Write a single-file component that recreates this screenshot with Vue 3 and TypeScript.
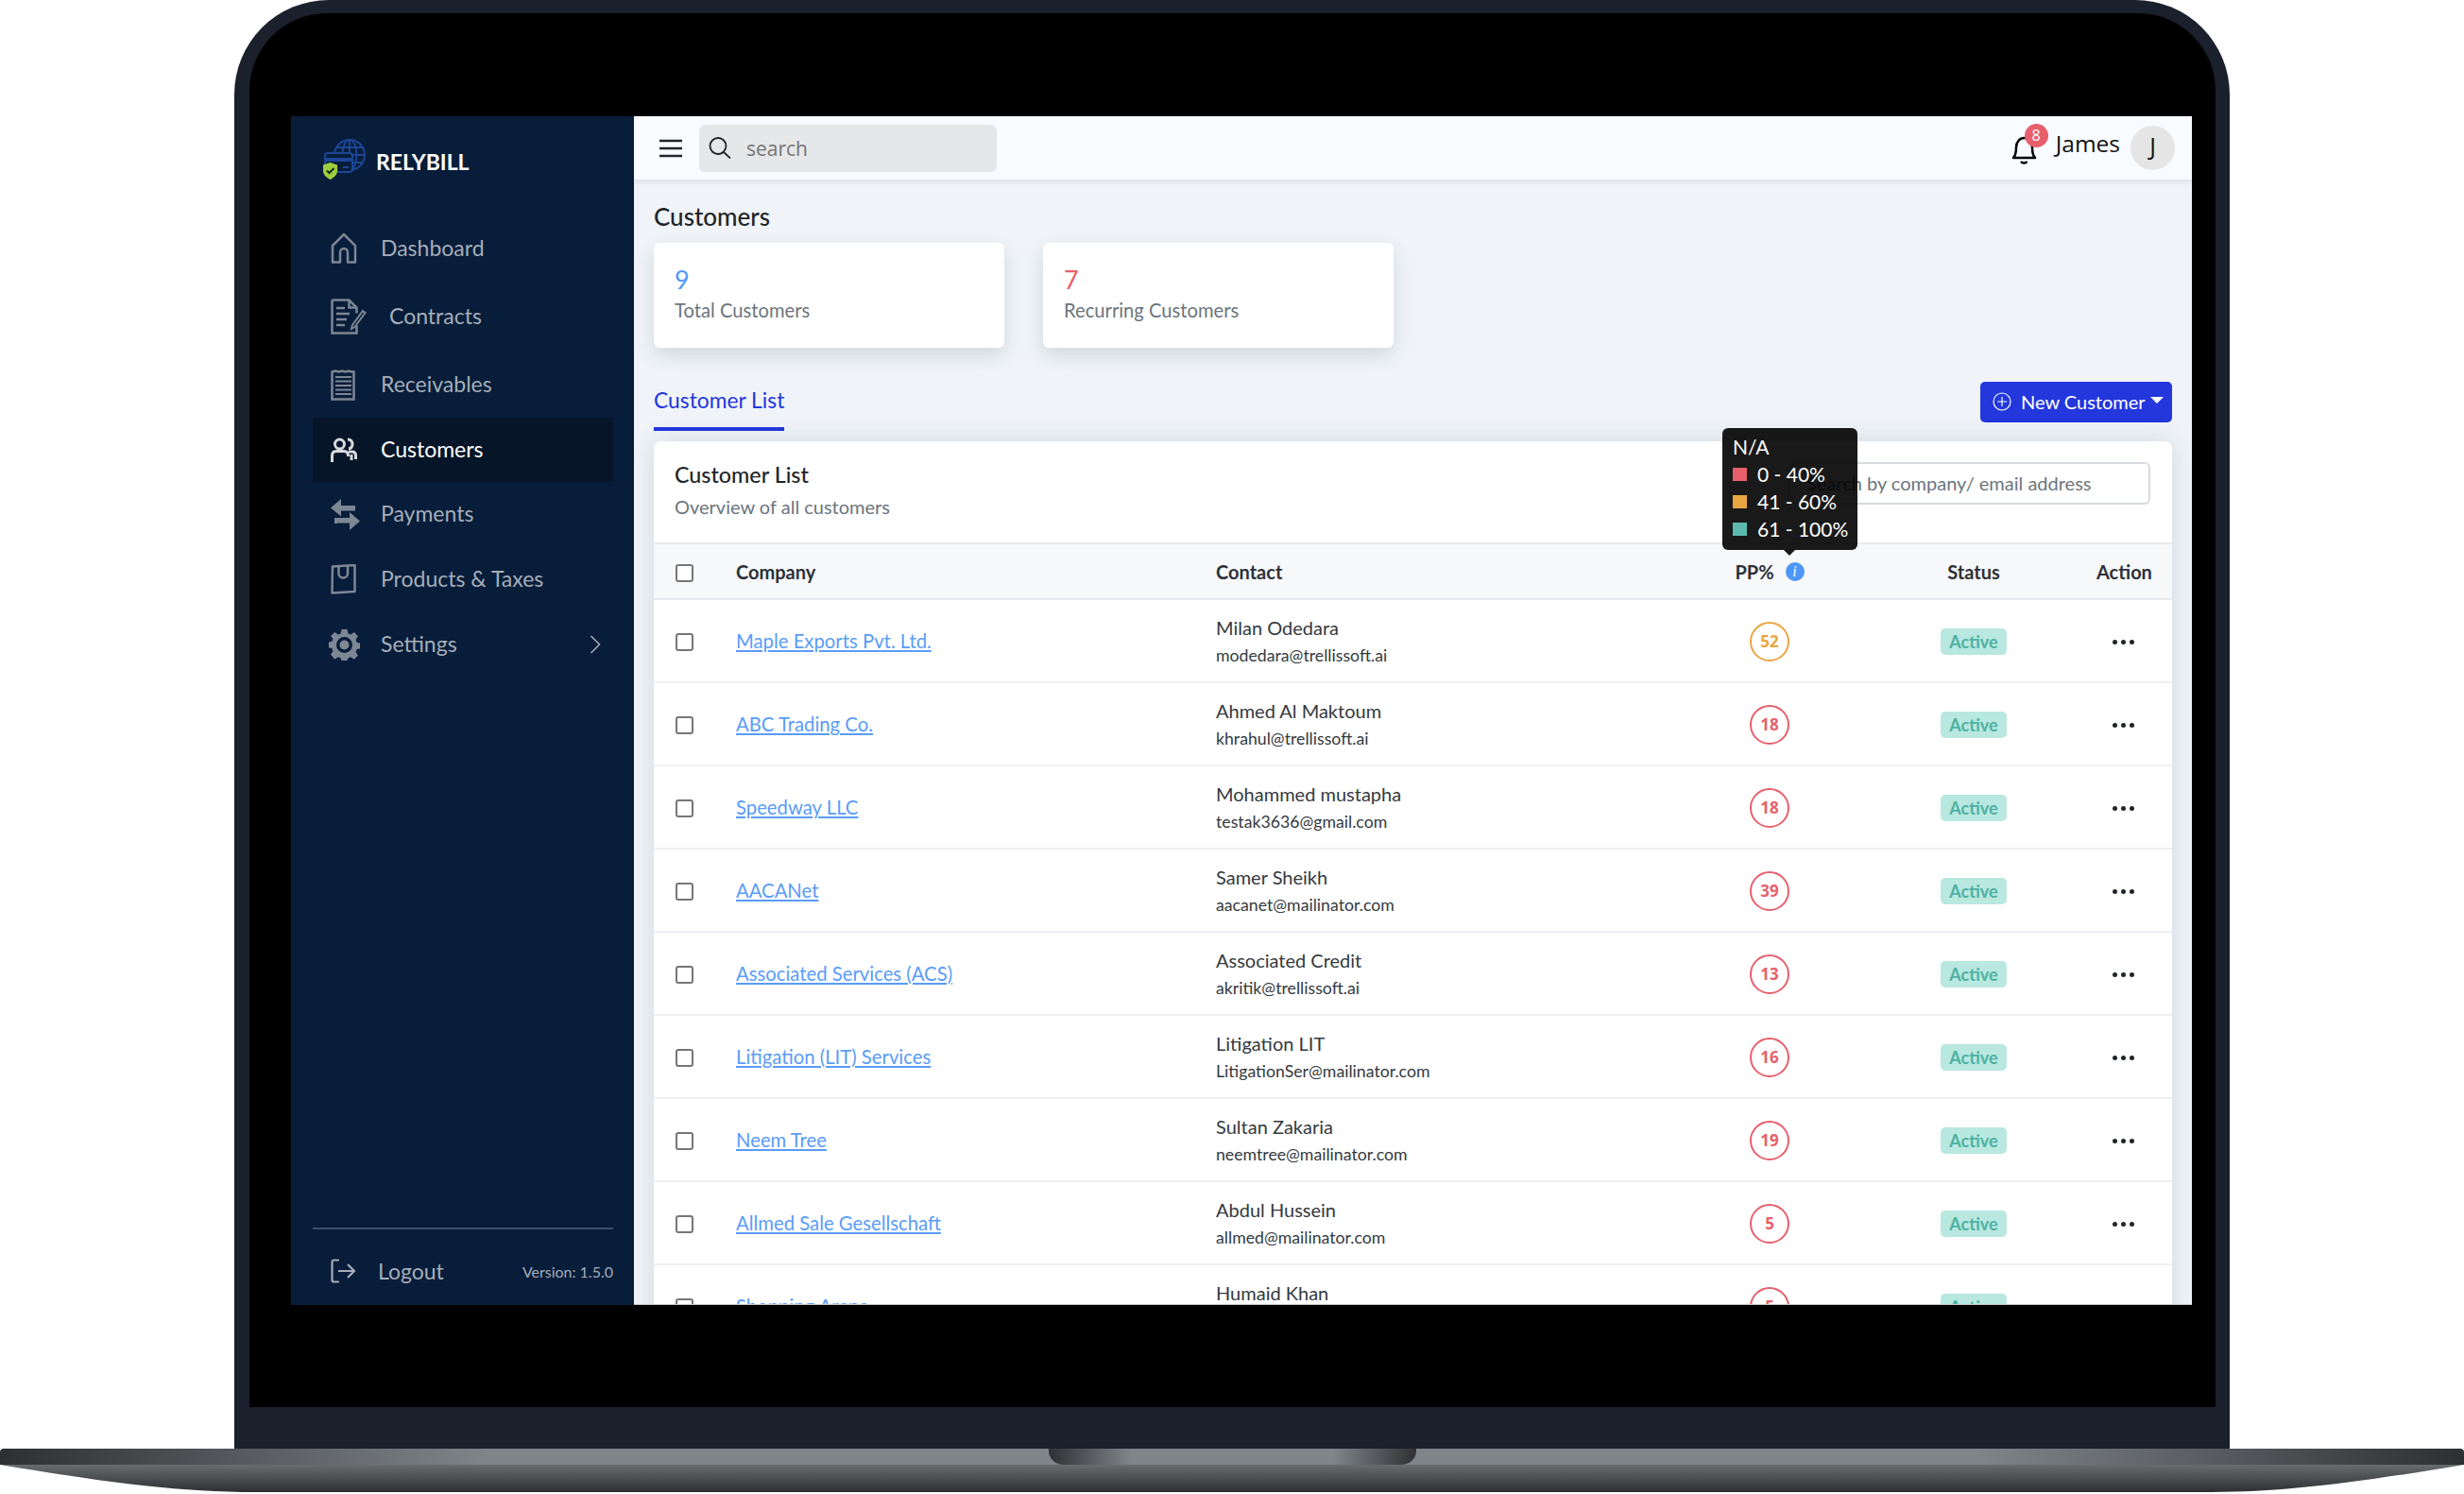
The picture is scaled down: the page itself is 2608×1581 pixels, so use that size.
<script setup lang="ts">
interface Customer {
  company: string
  contact: string
  email: string
  score: number
}

interface NavItem {
  label: string
  icon: string
  wide?: boolean
  active?: boolean
  arrow?: boolean
}

const navItems: NavItem[] = [
  { label: 'Dashboard', icon: 'home' },
  { label: 'Contracts', icon: 'contract', wide: true },
  { label: 'Receivables', icon: 'receipt' },
  { label: 'Customers', icon: 'people', active: true },
  { label: 'Payments', icon: 'swap' },
  { label: 'Products & Taxes', icon: 'bag' },
  { label: 'Settings', icon: 'gear', arrow: true }
]

const customers: Customer[] = [
  { company: 'Maple Exports Pvt. Ltd.', contact: 'Milan Odedara', email: 'modedara@trellissoft.ai', score: 52 },
  { company: 'ABC Trading Co.', contact: 'Ahmed Al Maktoum', email: 'khrahul@trellissoft.ai', score: 18 },
  { company: 'Speedway LLC', contact: 'Mohammed mustapha', email: 'testak3636@gmail.com', score: 18 },
  { company: 'AACANet', contact: 'Samer Sheikh', email: 'aacanet@mailinator.com', score: 39 },
  { company: 'Associated Services (ACS)', contact: 'Associated Credit', email: 'akritik@trellissoft.ai', score: 13 },
  { company: 'Litigation (LIT) Services', contact: 'Litigation LIT', email: 'LitigationSer@mailinator.com', score: 16 },
  { company: 'Neem Tree', contact: 'Sultan Zakaria', email: 'neemtree@mailinator.com', score: 19 },
  { company: 'Allmed Sale Gesellschaft', contact: 'Abdul Hussein', email: 'allmed@mailinator.com', score: 5 },
  { company: 'Shopping Arena', contact: 'Humaid Khan', email: 'shopping@mailinator.com', score: 5 }
]

const scoreClass = (score: number) => (score > 40 ? 'mid' : 'low')
</script>

<template>
  <div class="stage">
    <div class="frame">
      <div class="bezel">
        <div class="screen">
          <aside class="sidebar">
            <div class="brand">
              <svg class="logo" width="45" height="45" viewBox="0 0 45 45" fill="none">
                <g stroke="#1d4596" stroke-width="2">
                  <circle cx="28" cy="18" r="16" />
                  <ellipse cx="28" cy="18" rx="7.5" ry="16" />
                  <path d="M28 2v32M12 18h32M14.5 10h27M14.5 26h27" />
                </g>
                <rect x="2" y="16" width="29" height="20" rx="3" fill="#071d3a" stroke="#1d4596" stroke-width="2" />
                <path d="M2 21h29v4H2z" fill="#1d4596" />
                <path d="M21 31h6" stroke="#1d4596" stroke-width="2" />
                <path d="M7.5 26 15 28.500V35c0 4-3.500 7-7.500 9C3.500 42 0 39 0 35v-6.500z" fill="#9ccf3e" />
                <path d="m4 34.500 2.500 2.500 5-5" stroke="#0f2a1c" stroke-width="2" />
              </svg>
              <span class="brand-name">RELYBILL</span>
            </div>

            <nav class="nav">
              <a
                v-for="item in navItems"
                :key="item.label"
                class="nav-item"
                :class="{ active: item.active, wide: item.wide }"
              >
                <span class="nav-icon">
                  <svg v-if="item.icon === 'home'" width="28" height="34" viewBox="0 0 28 34" fill="none" stroke="currentColor" stroke-width="2.500">
                    <path d="M2 14 14 2l12 12v17.500h-8V21a4 4 0 0 0-8 0v10.500H2z" stroke-linejoin="round" />
                  </svg>
                  <svg v-else-if="item.icon === 'contract'" width="38" height="38" viewBox="0 0 38 38" fill="none" stroke="currentColor" stroke-width="2.500">
                    <path d="M1.500 1.500h18l8 8v6M1.500 1.500v35h26v-8" />
                    <path d="M19.500 1.500v8h8M6 10h9M6 16h14M6 22h11M6 28h9" />
                    <path d="m23 28 11-15 2.500 2L25.500 30l-3.500 2z" stroke-width="2" />
                  </svg>
                  <svg v-else-if="item.icon === 'receipt'" width="27" height="33" viewBox="0 0 27 33" fill="none" stroke="currentColor" stroke-width="2.500">
                    <path d="M1.500 2.500 5 1.500l3.500 1 3.500-1 3.500 1 3.500-1 3.500 1 2 0V31.500H1.500z" />
                    <path d="M5 8h17M5 12.500h17M5 17h17M5 21.500h17M5 26h17" stroke-width="2" />
                  </svg>
                  <svg v-else-if="item.icon === 'people'" width="28" height="27" viewBox="0 0 28 27" fill="none" stroke="currentColor" stroke-width="3">
                    <circle cx="9.500" cy="7" r="5" />
                    <path d="M18 2c3.500 0 5 2.500 5 5s-1.500 4.500-4 5" />
                    <path d="M1.500 26v-7c0-3 2-4.500 4.500-4.500h8c3 0 4.500 1.500 4.500 4.500v1M19 15h3.500c3 0 4 1.500 4 4v4M22 18v6" />
                  </svg>
                  <svg v-else-if="item.icon === 'swap'" width="31" height="33" viewBox="0 0 31 33" fill="currentColor">
                    <path d="M11 0v7h15v5.500H11v6L0 9.500z" />
                    <path d="M20 14v6H5v5.500h15V33l11-9.500z" />
                    <path d="M4 20h3v6H4z" />
                  </svg>
                  <svg v-else-if="item.icon === 'bag'" width="27" height="32" viewBox="0 0 27 32" fill="none" stroke="currentColor" stroke-width="2.500">
                    <path d="M2 2.500 25.500 1v28L1.500 30.500z" stroke-linejoin="round" />
                    <path d="M8.500 2v8c0 6 9.500 6 9.500 0V1.500" />
                  </svg>
                  <svg v-else-if="item.icon === 'gear'" class="gear" width="33" height="33" viewBox="0 0 33 33" fill="currentColor">
                    <path
                      fill-rule="evenodd"
                      d="M13.500 0h6l.8 4.300 2.900 1.200 3.600-2.500 4.200 4.200L28.500 10.800l1.200 2.900 3.300.8v6l-3.300.6-1.200 2.900 2.500 3.600-4.200 4.200-3.600-2.500-2.900 1.200-.8 3.500h-6l-.7-3.500-2.900-1.200-3.600 2.500L2 26.600l2.500-3.600-1.200-2.900-3.300-.6v-6l3.300-.8 1.200-2.900L2 7.200 6.200 3l3.700 2.500 2.900-1.200zM16.500 8a8.500 8.500 0 1 0 0 17 8.500 8.500 0 0 0 0-17zm0 3.500a5 5 0 1 1 0 10 5 5 0 0 1 0-10z"
                    />
                  </svg>
                </span>
                <span class="nav-label">{{ item.label }}</span>
                <svg v-if="item.arrow" class="chevron" width="12" height="20" viewBox="0 0 12 20" fill="none" stroke="currentColor" stroke-width="1.500">
                  <path d="m1.500 1 9 9-9 9" />
                </svg>
              </a>
            </nav>

            <div class="side-foot">
              <svg width="27" height="26" viewBox="0 0 27 26" fill="none" stroke="currentColor" stroke-width="2.200">
                <path d="M8 1.500H3.500a2 2 0 0 0-2 2v19a2 2 0 0 0 2 2H8" stroke-linecap="round" />
                <path d="M8 13h17M18 6l7 7-7 7" />
              </svg>
              <span class="logout">Logout</span>
              <span class="version">Version: 1.5.0</span>
            </div>
          </aside>

          <main class="main">
            <header class="topbar">
              <svg class="burger" width="24" height="20" viewBox="0 0 24 20" stroke="#212529" stroke-width="2.500">
                <path d="M0 2h24M0 10h24M0 18h24" />
              </svg>
              <div class="search">
                <svg width="24" height="23" viewBox="0 0 24 23" fill="none" stroke="#212529" stroke-width="1.800">
                  <circle cx="10" cy="9.500" r="8.500" />
                  <path d="m16 16 7 6.500" />
                </svg>
                <span>search</span>
              </div>
              <div class="user">
                <span class="bell">
                  <svg width="27" height="31" viewBox="0 0 27 31" fill="none" stroke="#000" stroke-width="2.500">
                    <path d="M2 24c3-3 3-7 3-11 0-6 4-10 8.500-10S22 7 22 13c0 4 0 8 3 11z" stroke-linejoin="round" />
                    <path d="M10 28c1.500 2 5 2 6.500 0" />
                  </svg>
                  <b class="badge">8</b>
                </span>
                <span class="user-name">James</span>
                <span class="avatar">J</span>
              </div>
            </header>

            <div class="content">
              <h1 class="page-title">Customers</h1>
              <div class="stats">
                <div class="stat">
                  <div class="stat-num blue">9</div>
                  <div class="stat-label">Total Customers</div>
                </div>
                <div class="stat">
                  <div class="stat-num red">7</div>
                  <div class="stat-label">Recurring Customers</div>
                </div>
              </div>

              <div class="tabs">
                <span class="tab">Customer List</span>
                <button class="new-btn">
                  <svg width="20" height="20" viewBox="0 0 20 20" fill="none" stroke="#fff" stroke-width="1.200">
                    <circle cx="10" cy="10" r="9" />
                    <path d="M10 5v10M5 10h10" />
                  </svg>
                  New Customer
                  <i class="caret" />
                </button>
              </div>

              <section class="list-card">
                <div class="list-head">
                  <div>
                    <h2 class="list-title">Customer List</h2>
                    <p class="list-sub">Overview of all customers</p>
                  </div>
                  <input class="list-search" placeholder="Search by company/ email address" />
                </div>

                <div class="tooltip">
                  <div>N/A</div>
                  <div class="tip-row"><i class="swatch s-red" />0 - 40%</div>
                  <div class="tip-row"><i class="swatch s-orange" />41 - 60%</div>
                  <div class="tip-row"><i class="swatch s-teal" />61 - 100%</div>
                </div>

                <div class="row head-row">
                  <span class="check" />
                  <span>Company</span>
                  <span>Contact</span>
                  <span class="pp-head">PP%<i class="info">i</i></span>
                  <span class="center">Status</span>
                  <span class="action-head">Action</span>
                </div>
                <div v-for="c in customers" :key="c.company" class="row body-row">
                  <span class="check" />
                  <a class="company">{{ c.company }}</a>
                  <div>
                    <div class="contact">{{ c.contact }}</div>
                    <div class="email">{{ c.email }}</div>
                  </div>
                  <div class="center">
                    <span class="score" :class="scoreClass(c.score)">{{ c.score }}</span>
                  </div>
                  <div class="center"><span class="pill">Active</span></div>
                  <div class="dots"><i /><i /><i /></div>
                </div>
              </section>
            </div>
          </main>
        </div>
      </div>
    </div>

    <svg class="base" width="2608" height="48" viewBox="0 0 2608 48">
      <defs>
        <linearGradient id="bandFill" x1="0" x2="1" y1="0" y2="0">
          <stop offset="0" stop-color="#2e2f32" />
          <stop offset="0.2" stop-color="#80858a" />
          <stop offset="0.8" stop-color="#80858a" />
          <stop offset="1" stop-color="#2e2f32" />
        </linearGradient>
        <linearGradient id="lipFill" x1="0" x2="0" y1="0" y2="1">
          <stop offset="0" stop-color="#686c6f" />
          <stop offset="1" stop-color="#2e2f32" />
        </linearGradient>
        <linearGradient id="hingeFill" x1="0" x2="1" y1="0" y2="0">
          <stop offset="0" stop-color="#2f3033" />
          <stop offset="0.225" stop-color="#80858a" />
          <stop offset="0.775" stop-color="#80858a" />
          <stop offset="1" stop-color="#2f3033" />
        </linearGradient>
      </defs>
      <path d="M0 4a4 4 0 0 1 4-4h2600a4 4 0 0 1 4 4v13H0z" fill="url(#bandFill)" />
      <path d="M0 17h2608C2500 35 2420 46 2340 46H268C188 46 108 35 0 17z" fill="url(#lipFill)" />
      <path d="M1110 0h389v2a15 15 0 0 1-15 15h-359a15 15 0 0 1-15-15z" fill="url(#hingeFill)" />
    </svg>
  </div>
</template>

<style scoped>
.stage {
  width: 2608px;
  height: 1581px;
  overflow: hidden;
  background: #fff;
  font-family: Lato, 'Open Sans', sans-serif;
  color: #212529;
}

.frame {
  box-sizing: border-box;
  width: 2112px;
  height: 1533px;
  margin: 0 248px;
  padding: 14px 15px 44px 16px;
  background: #1a202c;
  border-radius: 100px 100px 0 0;
}

.bezel {
  box-sizing: border-box;
  height: 100%;
  padding: 109px 25px 108px 44px;
  background: #000;
  border-radius: 82px 82px 0 0;
}

.screen {
  display: flex;
  height: 1258px;
  overflow: hidden;
}

.base {
  display: block;
}

/* sidebar */
.sidebar {
  box-sizing: border-box;
  display: flex;
  flex-direction: column;
  flex: 0 0 363px;
  padding: 23px 22px 0 23px;
  background: #071d3a;
  color: #a6aeb9;
}

.brand {
  display: flex;
  align-items: center;
  gap: 11px;
  height: 44px;
  margin-left: 11px;
}

.logo {
  flex: none;
}

.brand-name {
  margin-top: 5px;
  color: #fff;
  font-size: 23px;
  font-weight: 700;
}

.nav {
  margin-top: 39px;
}

.nav-item {
  display: flex;
  align-items: center;
  height: 68px;
  margin-bottom: 1px;
  padding: 0 13px 0 19px;
  font-size: 23px;
}

.nav-item:nth-child(1),
.nav-item:nth-child(2) {
  margin-bottom: 4px;
}

.nav-item:nth-child(4) {
  margin-bottom: 0;
}

.nav-item.active {
  background: #061528;
  color: #fff;
}

.nav-label {
  margin-top: -3px;
}

.nav-icon {
  display: flex;
  flex: 0 0 53px;
  color: #7d8794;
}

.nav-item.wide .nav-icon {
  flex-basis: 62px;
}

.nav-item.active .nav-icon {
  color: #d8dadd;
}

.gear {
  margin-left: -2px;
}

.chevron {
  margin-left: auto;
}

.side-foot {
  display: flex;
  align-items: center;
  height: 36px;
  margin-top: auto;
  padding: 26px 0 18px 19px;
  border-top: 2px solid #3d5068;
}

.logout {
  margin-left: 23px;
  font-size: 23px;
}

.version {
  margin-left: auto;
  font-size: 16px;
}

/* main */
.main {
  flex: 1;
  min-width: 0;
  background: #f0f4f8;
  border-bottom: 1px solid #c4c4c4;
  overflow: hidden;
}

.topbar {
  position: relative;
  z-index: 1;
  box-sizing: border-box;
  display: flex;
  align-items: center;
  height: 67px;
  padding: 0 18px 0 27px;
  background: #f8fbff;
  box-shadow: 0 2px 6px rgba(0, 0, 0, 0.1);
}

.burger {
  flex: none;
}

.search {
  box-sizing: border-box;
  display: flex;
  align-items: center;
  gap: 16px;
  width: 315px;
  height: 50px;
  margin-left: 18px;
  padding-left: 10px;
  background: #e6e7e9;
  border-radius: 6px;
  color: #757575;
  font-family: 'Open Sans', sans-serif;
  font-size: 21px;
}

.user {
  display: flex;
  align-items: center;
  margin-left: auto;
  font-family: 'Open Sans', sans-serif;
}

.bell {
  position: relative;
  display: flex;
  margin-top: 4px;
}

.badge {
  position: absolute;
  top: -12px;
  left: 14px;
  width: 25px;
  height: 25px;
  border-radius: 50%;
  background: #e85f6c;
  color: #fff;
  font-size: 16px;
  font-weight: 400;
  line-height: 25px;
  text-align: center;
}

.user-name {
  margin-left: 20px;
  margin-top: -10px;
  color: #111;
  font-size: 24.500px;
}

.avatar {
  width: 47px;
  height: 47px;
  margin-left: 11px;
  border-radius: 50%;
  background: #e4e5e4;
  color: #111;
  font-size: 25px;
  line-height: 43px;
  text-align: center;
}

.content {
  padding: 24px 21px 0;
}

.page-title {
  margin: 0 0 11px;
  font-size: 26px;
  font-weight: 500;
  line-height: 30px;
  padding-bottom: 2px;
}

.stats {
  display: flex;
  gap: 41px;
}

.stat {
  box-sizing: border-box;
  width: 371px;
  height: 111px;
  padding: 23px 22px 0;
  background: #fff;
  border-radius: 6px;
  box-shadow: 0 8px 20px rgba(30, 50, 70, 0.14);
}

.stat-num {
  font-size: 27px;
  line-height: 32px;
}

.blue {
  color: #4f96f7;
}

.red {
  color: #e85f6c;
}

.stat-label {
  margin-top: 2px;
  color: #6c757d;
  font-size: 20.200px;
  line-height: 28px;
}

.tabs {
  display: flex;
  justify-content: space-between;
  align-items: flex-start;
  height: 52px;
  margin: 36px 0 11px;
}

.tab {
  box-sizing: border-box;
  height: 52px;
  padding-top: 4px;
  border-bottom: 4px solid #2336dd;
  color: #2336dd;
  font-size: 22.800px;
  line-height: 30px;
}

.new-btn {
  display: flex;
  align-items: center;
  gap: 10px;
  height: 43px;
  width: 203px;
  padding: 0 0 2px 13px;
  border: 0;
  border-radius: 5px;
  background: #2337dd;
  color: #fff;
  font-family: inherit;
  font-size: 20px;
}

.caret {
  width: 0;
  height: 0;
  margin-left: -5px;
  margin-top: -2px;
  border-top: 7px solid #fff;
  border-left: 7px solid transparent;
  border-right: 7px solid transparent;
}

.list-card {
  position: relative;
  background: #fff;
  border-radius: 8px 8px 0 0;
  box-shadow: 0 0 28px rgba(30, 50, 70, 0.14);
}

.list-head {
  box-sizing: border-box;
  display: flex;
  justify-content: space-between;
  height: 107px;
  padding: 22px 23px 0 22px;
}

.list-title {
  margin: 0;
  font-size: 23.300px;
  font-weight: 500;
  line-height: 26px;
}

.list-sub {
  margin: 8px 0 0;
  color: #6c757d;
  font-size: 20px;
  line-height: 26px;
}

.list-search {
  box-sizing: border-box;
  width: 383px;
  height: 45px;
  padding: 0 17px 2px;
  border: 2px solid #d7dbe0;
  border-radius: 6px;
  font-family: inherit;
  font-size: 20px;
  outline: none;
}

.list-search::placeholder {
  color: #6c757d;
}

.tooltip {
  position: absolute;
  top: -14px;
  left: 1131px;
  z-index: 2;
  box-sizing: border-box;
  width: 143px;
  height: 129px;
  padding: 5px 11px;
  border-radius: 6px;
  background: rgba(0, 0, 0, 0.9);
  color: #fff;
  font-size: 21px;
  line-height: 29px;
  white-space: nowrap;
}

.tooltip::after {
  content: '';
  position: absolute;
  bottom: -6px;
  left: 65px;
  border-top: 6px solid rgba(0, 0, 0, 0.9);
  border-left: 6px solid transparent;
  border-right: 6px solid transparent;
}

.tip-row {
  display: flex;
  align-items: center;
}

.swatch {
  flex: none;
  width: 15px;
  height: 14px;
  margin-right: 11px;
}

.s-red {
  background: #e85f6c;
}

.s-orange {
  background: #e9a641;
}

.s-teal {
  background: #5cb9ad;
}

.row {
  box-sizing: border-box;
  display: grid;
  grid-template-columns: 64px 508px 500px 172px 260px 57px;
  align-items: center;
  padding: 0 23px;
}

.head-row {
  height: 61px;
  background: #f7f8fa;
  border-top: 2px solid #e8eaee;
  border-bottom: 2px solid #e8eaee;
  font-size: 20px;
  font-weight: 700;
  color: #2c3138;
}

.head-row .check {
  margin-top: 3px;
}

.body-row {
  height: 88px;
  padding-top: 2px;
  border-bottom: 2px solid #edeff3;
}

.check {
  box-sizing: border-box;
  width: 19px;
  height: 19px;
  border: 2px solid #767676;
  border-radius: 3px;
  background: #fff;
}

.center {
  text-align: center;
}

.pp-head {
  display: flex;
  align-items: center;
  justify-content: center;
  gap: 12px;
}

.info {
  width: 20px;
  height: 20px;
  border-radius: 50%;
  background: #4f96f7;
  color: #fff;
  font-family: 'Liberation Serif', serif;
  font-size: 16px;
  font-weight: 400;
  line-height: 20px;
  text-align: center;
}

.action-head {
  padding-right: 1px;
  text-align: right;
}

.company {
  justify-self: start;
  margin-top: -2px;
  color: #5a9cf8;
  font-size: 20.300px;
  text-decoration: underline;
}

.contact {
  margin-top: -3px;
  color: #343a40;
  font-size: 20px;
  line-height: 28px;
}

.email {
  margin-top: 4px;
  color: #343a40;
  font-size: 17.700px;
  line-height: 24px;
}

.score {
  box-sizing: border-box;
  display: inline-block;
  width: 42px;
  height: 42px;
  border: 2px solid;
  border-radius: 50%;
  font-family: 'Open Sans', sans-serif;
  font-size: 17px;
  font-weight: 700;
  line-height: 37px;
  text-align: center;
}

.score.low {
  color: #e85f6c;
}

.score.mid {
  color: #e9a641;
}

.pill {
  display: inline-block;
  width: 70px;
  height: 28px;
  border-radius: 5px;
  background: #b8e8e0;
  color: #4fb1a2;
  font-size: 18px;
  font-weight: 700;
  line-height: 28px;
  text-align: center;
}

.dots {
  display: flex;
  justify-content: center;
  gap: 4px;
}

.dots i {
  width: 5px;
  height: 5px;
  border-radius: 50%;
  background: #212529;
}
</style>
